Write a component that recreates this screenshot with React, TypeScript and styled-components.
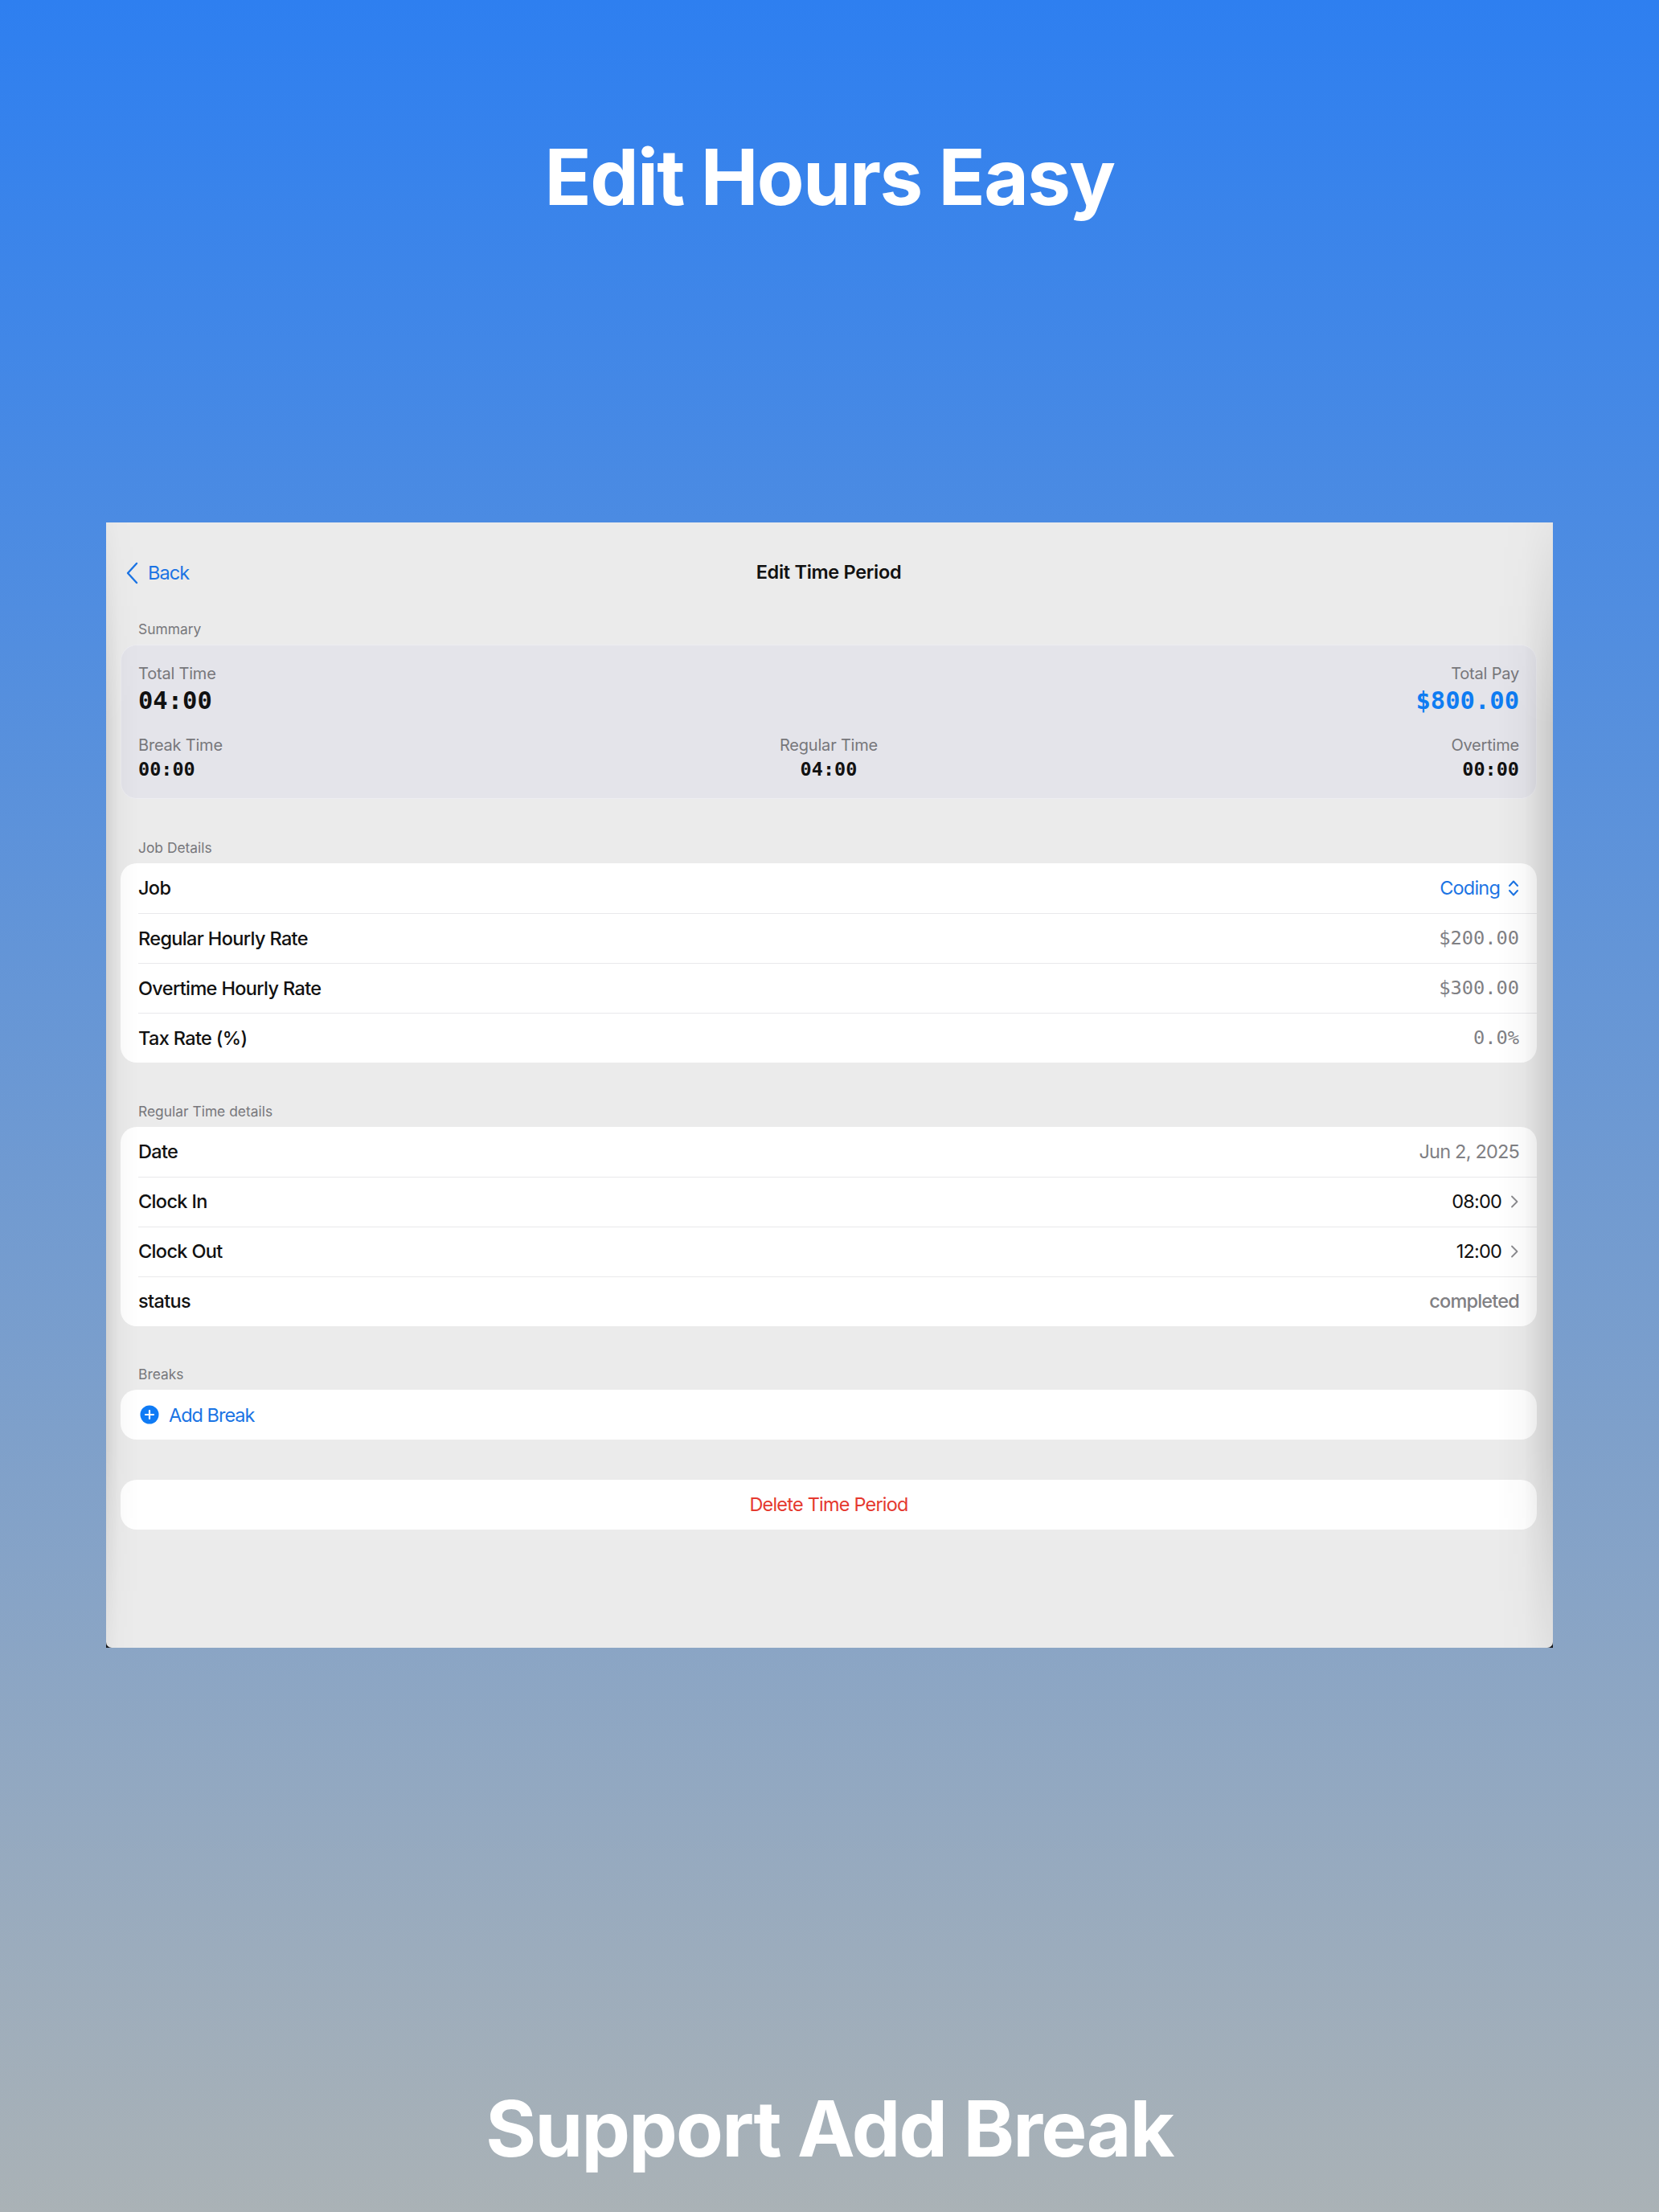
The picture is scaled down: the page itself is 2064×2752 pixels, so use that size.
import React from "react";
import styled, { createGlobalStyle } from "styled-components";

const Global = createGlobalStyle`
  html, body { margin: 0; padding: 0; }
  body { font-family: Inter, "Noto Sans", sans-serif; -webkit-font-smoothing: antialiased; }
`;

const Page = styled.div`
  width: 2064px;
  height: 2752px;
  display: flex;
  flex-direction: column;
  align-items: center;
  overflow: hidden;
  background: linear-gradient(180deg, rgb(46, 127, 240) 0%, rgb(170, 178, 182) 100%);
`;

const Headline = styled.h1<{ $top: number }>`
  margin: ${(p) => p.$top}px 0 0;
  height: 116px;
  line-height: 116px;
  font-size: 96px;
  font-weight: 700;
  letter-spacing: -1.7px;
  color: #fff;
  white-space: nowrap;
`;

const Frame = styled.div`
  width: 1800px;
  height: 1400px;
  margin-top: 372px;
  background: #14161a;
`;

const Screen = styled.div`
  position: relative;
  height: 100%;
  padding: 0 20px 0 18px;
  box-sizing: border-box;
  background: #ebebeb;
  border-radius: 0 0 7px 7px;
  overflow: hidden;
`;

const EdgeShade = styled.div`
  position: absolute;
  inset: 0;
  pointer-events: none;
  background: linear-gradient(
    90deg,
    rgba(0, 0, 0, 0.1) 0,
    rgba(0, 0, 0, 0.025) 16px,
    rgba(0, 0, 0, 0) 40px,
    rgba(0, 0, 0, 0) calc(100% - 70px),
    rgba(0, 0, 0, 0.025) calc(100% - 36px),
    rgba(0, 0, 0, 0.14) 100%
  );
  -webkit-mask-image: linear-gradient(180deg, rgba(0,0,0,0.15) 0, #000 18%, #000 82%, rgba(0,0,0,0.3) 100%);
  mask-image: linear-gradient(180deg, rgba(0,0,0,0.15) 0, #000 18%, #000 82%, rgba(0,0,0,0.3) 100%);
`;

const NavBar = styled.div`
  position: relative;
  height: 122px;
  display: flex;
  align-items: center;
  justify-content: center;
`;

const BackButton = styled.div`
  position: absolute;
  left: 6px;
  top: 49px;
  display: flex;
  align-items: center;
  gap: 12px;
  font-size: 23.5px;
  line-height: 26px;
  letter-spacing: -0.9px;
  color: #1b74e4;
`;

const NavTitle = styled.div`
  font-size: 23.5px;
  font-weight: 600;
  letter-spacing: -0.3px;
  color: #111;
`;

const Stack = styled.div`
  display: flex;
  flex-direction: column;
  gap: 49.4px;
`;

const Section = styled.section``;

const SectionLabel = styled.div`
  height: 22px;
  line-height: 22px;
  margin: 0 0 8px 22px;
  font-size: 17.4px;
  color: #77777b;
`;

const SummaryCard = styled.div`
  height: 192px;
  margin-bottom: 1px;
  padding: 21px 22px 0;
  box-sizing: border-box;
  background: #e4e4ea;
  border-radius: 20px;
  box-shadow: inset 0 0 0 1px rgba(255, 255, 255, 0.35);
  display: flex;
  flex-direction: column;
  gap: 21px;
`;

const SummaryRow = styled.div`
  display: grid;
  grid-template-columns: 1fr 1fr 1fr;
`;

const Metric = styled.div<{ $align: "left" | "center" | "right"; $column?: number }>`
  display: flex;
  flex-direction: column;
  text-align: ${(p) => p.$align};
  grid-column: ${(p) => p.$column ?? "auto"};
`;

const MetricLabel = styled.div`
  font-size: 20px;
  line-height: 30px;
  letter-spacing: -0.2px;
  color: #77777b;
`;

const MetricValue = styled.div<{ $large?: boolean; $blue?: boolean }>`
  font-family: "DejaVu Sans Mono", monospace;
  font-weight: 700;
  font-size: ${(p) => (p.$large ? 30.5 : 23.5)}px;
  line-height: ${(p) => (p.$large ? 38 : 30)}px;
  color: ${(p) => (p.$blue ? "#0f7cf2" : "#111")};
`;

const Card = styled.div`
  background: #fff;
  border-radius: 20px;
  overflow: hidden;
`;

const Row = styled.div`
  height: 62px;
  margin-left: 22px;
  padding: 0 22px 1px 0;
  box-sizing: border-box;
  display: flex;
  align-items: center;
  justify-content: space-between;
  & + & {
    border-top: 1px solid #e9e9eb;
  }
`;

const RowLabel = styled.div`
  font-size: 23.5px;
  font-weight: 450;
  letter-spacing: -0.65px;
  color: #111;
`;

const RowValue = styled.div<{ $tone?: "grey" | "black" | "blue"; $medium?: boolean }>`
  display: flex;
  align-items: center;
  gap: 10px;
  font-size: 23.5px;
  letter-spacing: -0.8px;
  font-weight: ${(p) => (p.$medium ? 500 : 400)};
  color: ${(p) => (p.$tone === "black" ? "#111" : p.$tone === "blue" ? "#1b74e4" : "#808084")};
`;

const MonoValue = styled.div`
  font-family: "DejaVu Sans Mono", monospace;
  font-size: 23.7px;
  color: #808084;
`;

const AddRow = styled.div`
  height: 62px;
  padding-left: 24px;
  display: flex;
  align-items: center;
  gap: 12px;
  font-size: 23.5px;
  letter-spacing: -1px;
  color: #1b74e4;
`;

const DeleteRow = styled.div`
  height: 62px;
  display: flex;
  align-items: center;
  justify-content: center;
  font-size: 23.5px;
  letter-spacing: -0.8px;
  color: #e5392f;
`;

const BackChevron = () => (
  <svg width="16" height="28" viewBox="0 0 16 28" fill="none">
    <path d="M14 2 L3 14 L14 26" stroke="#1b74e4" strokeWidth="2.4" strokeLinecap="round" strokeLinejoin="round" />
  </svg>
);

const UpDown = () => (
  <svg width="14" height="24" viewBox="0 0 14 24" fill="none">
    <path d="M2 9 L7 3.5 L12 9 M2 15 L7 20.5 L12 15" stroke="#1b74e4" strokeWidth="2" strokeLinecap="round" strokeLinejoin="round" />
  </svg>
);

const Disclosure = () => (
  <svg width="12" height="18" viewBox="0 0 12 18" fill="none">
    <path d="M3 2.5 L9.5 9 L3 15.5" stroke="#8a8a8e" strokeWidth="1.8" strokeLinecap="round" strokeLinejoin="round" />
  </svg>
);

const PlusCircle = () => (
  <svg width="24" height="24" viewBox="0 0 24 24">
    <circle cx="12" cy="12" r="11.5" fill="#0f7bf5" />
    <path d="M12 7 V17 M7 12 H17" stroke="#fff" strokeWidth="2.2" strokeLinecap="round" />
  </svg>
);

export default function App() {
  return (
    <Page>
      <Global />
      <Headline $top={162}>Edit Hours Easy</Headline>
      <Frame>
        <Screen>
          <NavBar>
            <BackButton>
              <BackChevron />
              Back
            </BackButton>
            <NavTitle>Edit Time Period</NavTitle>
          </NavBar>
          <Stack>
            <Section>
              <SectionLabel>Summary</SectionLabel>
              <SummaryCard>
                <SummaryRow>
                  <Metric $align="left">
                    <MetricLabel>Total Time</MetricLabel>
                    <MetricValue $large>04:00</MetricValue>
                  </Metric>
                  <Metric $align="right" $column={3}>
                    <MetricLabel>Total Pay</MetricLabel>
                    <MetricValue $large $blue>$800.00</MetricValue>
                  </Metric>
                </SummaryRow>
                <SummaryRow>
                  <Metric $align="left">
                    <MetricLabel>Break Time</MetricLabel>
                    <MetricValue>00:00</MetricValue>
                  </Metric>
                  <Metric $align="center">
                    <MetricLabel>Regular Time</MetricLabel>
                    <MetricValue>04:00</MetricValue>
                  </Metric>
                  <Metric $align="right">
                    <MetricLabel>Overtime</MetricLabel>
                    <MetricValue>00:00</MetricValue>
                  </Metric>
                </SummaryRow>
              </SummaryCard>
            </Section>
            <Section>
              <SectionLabel>Job Details</SectionLabel>
              <Card>
                <Row>
                  <RowLabel>Job</RowLabel>
                  <RowValue $tone="blue">Coding <UpDown /></RowValue>
                </Row>
                <Row>
                  <RowLabel>Regular Hourly Rate</RowLabel>
                  <MonoValue>$200.00</MonoValue>
                </Row>
                <Row>
                  <RowLabel>Overtime Hourly Rate</RowLabel>
                  <MonoValue>$300.00</MonoValue>
                </Row>
                <Row>
                  <RowLabel>Tax Rate (%)</RowLabel>
                  <MonoValue>0.0%</MonoValue>
                </Row>
              </Card>
            </Section>
            <Section>
              <SectionLabel>Regular Time details</SectionLabel>
              <Card>
                <Row>
                  <RowLabel>Date</RowLabel>
                  <RowValue>Jun 2, 2025</RowValue>
                </Row>
                <Row>
                  <RowLabel>Clock In</RowLabel>
                  <RowValue $tone="black">08:00 <Disclosure /></RowValue>
                </Row>
                <Row>
                  <RowLabel>Clock Out</RowLabel>
                  <RowValue $tone="black">12:00 <Disclosure /></RowValue>
                </Row>
                <Row>
                  <RowLabel>status</RowLabel>
                  <RowValue $medium>completed</RowValue>
                </Row>
              </Card>
            </Section>
            <Section>
              <SectionLabel>Breaks</SectionLabel>
              <Card>
                <AddRow><PlusCircle /> Add Break</AddRow>
              </Card>
            </Section>
            <Card>
              <DeleteRow>Delete Time Period</DeleteRow>
            </Card>
          </Stack>
          <EdgeShade />
        </Screen>
      </Frame>
      <Headline $top={540}>Support Add Break</Headline>
    </Page>
  );
}
